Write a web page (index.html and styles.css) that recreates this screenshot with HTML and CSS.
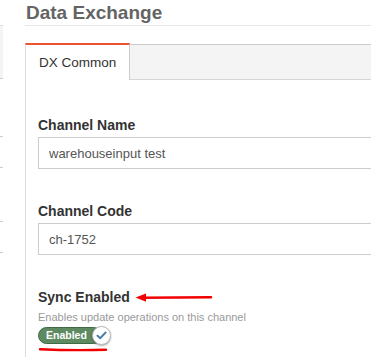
FILE: index.html
```html
<!DOCTYPE html>
<html lang="en">
<head>
    <meta charset="UTF-8">
    <meta name="viewport" content="width=device-width, initial-scale=1.0">
    <title>Data Exchange</title>
    <link rel="stylesheet" href="styles.css">
</head>
<body>
    <div class="page">
        <div class="sidebar">
            <div class="side-tabs"></div>
            <div class="side-input first"></div>
            <div class="side-input"></div>
        </div>
        <div class="main">
            <h1 class="title">Data Exchange</h1>
            <div class="tabs">
                <div class="tab active">DX Common</div>
            </div>
            <div class="panel">
                <div class="field">
                    <label class="label">Channel Name</label>
                    <input type="text" class="input" value="warehouseinput test">
                </div>
                <div class="field">
                    <label class="label">Channel Code</label>
                    <input type="text" class="input" value="ch-1752">
                </div>
                <div class="field">
                    <label class="label">Sync Enabled</label>
                    <div class="help">Enables update operations on this channel</div>
                    <div class="toggle">
                        <span class="toggle-track">Enabled</span>
                        <span class="toggle-knob">
                            <svg width="11" height="9" viewBox="0 0 11 9"><path d="M1.5 4.8 L4.2 7.3 L9.6 1.5" fill="none" stroke="#4f7fa6" stroke-width="2" stroke-linecap="round" stroke-linejoin="round"/></svg>
                        </span>
                    </div>
                </div>
            </div>
        </div>
        <svg class="annot" width="371" height="357" viewBox="0 0 371 357">
            <path d="M142 297.8 L211 297.3" stroke="#f20000" stroke-width="2.6" stroke-linecap="round"/>
            <polygon points="135.5,297.6 146,293.4 146,301.8" fill="#f20000"/>
            <path d="M40 349.2 Q70 350.6 106 349.8" fill="none" stroke="#f20000" stroke-width="2.4" stroke-linecap="round"/>
        </svg>
    </div>
</body>
</html>
```

FILE: styles.css
```css
body {
    margin: 0;
    overflow: hidden;
    background: #fff;
    font-family: 'Liberation Sans', Arial, sans-serif;
}
.page {
    position: relative;
    display: flex;
    width: 371px;
    height: 357px;
    overflow: hidden;
}
.sidebar {
    width: 25px;
    flex-shrink: 0;
    padding-top: 25px;
}
.side-tabs {
    width: 3px;
    height: 52px;
    background: #f4f4f4;
    border-top: 1px solid #ddd;
    border-bottom: 1px solid #ccc;
}
.side-input {
    width: 3px;
    height: 30px;
    border-top: 1px solid #ccc;
    border-bottom: 1px solid #ccc;
    margin-top: 53px;
}
.side-input.first {
    margin-top: 57px;
}
.main {
    flex: 1;
    min-width: 0;
}
.title {
    margin: 0;
    padding: 2px 0 1px 1px;
    font-size: 19px;
    line-height: 22px;
    font-weight: bold;
    color: #646464;
    border-bottom: 1px solid #e6e6e6;
}
.tabs {
    display: flex;
    margin-top: 18px;
    background: #f4f4f4;
    border-top: 1px solid #ccc;
    border-bottom: 1px solid #d6d6d6;
    border-left: 1px solid #ddd;
}
.tab {
    width: 90px;
    height: 35px;
    margin: -2px 0 -1px -1px;
    padding-left: 13px;
    line-height: 35px;
    font-size: 13.5px;
    color: #333;
    background: #fff;
    border-top: 2px solid #ea5530;
    border-left: 1px solid #ddd;
    border-right: 1px solid #ccc;
}
.panel {
    border-left: 1px solid #ddd;
    padding: 37px 0 0 12px;
    height: 300px;
}
.field {
    margin-bottom: 34px;
}
.label {
    display: block;
    font-size: 14px;
    line-height: 16px;
    font-weight: bold;
    color: #333;
    margin-bottom: 4px;
}
.input {
    display: block;
    box-sizing: border-box;
    width: 360px;
    height: 32px;
    padding: 0 10px;
    border: 1px solid #ccc;
    border-radius: 0;
    font-family: 'Liberation Sans', Arial, sans-serif;
    font-size: 13px;
    color: #555;
    background: #fff;
}
.help {
    margin-top: 5px;
    font-size: 11px;
    line-height: 14px;
    color: #9a9a9a;
}
.toggle {
    display: flex;
    align-items: center;
    margin-top: 2px;
}
.toggle-track {
    box-sizing: border-box;
    width: 64px;
    height: 17px;
    padding-left: 7px;
    line-height: 15px;
    font-size: 10.5px;
    font-weight: bold;
    color: #fff;
    background: #5e8a61;
    border: 1px solid #3f6a48;
    border-radius: 9px;
}
.toggle-knob {
    box-sizing: border-box;
    display: flex;
    align-items: center;
    justify-content: center;
    width: 19px;
    height: 19px;
    margin-left: -10px;
    border-radius: 50%;
    background: #fff;
    border: 1px solid #b9b9b9;
    box-shadow: 0 1px 2px rgba(0, 0, 0, 0.35);
}
.annot {
    position: absolute;
    left: 0;
    top: 0;
    pointer-events: none;
}
```
